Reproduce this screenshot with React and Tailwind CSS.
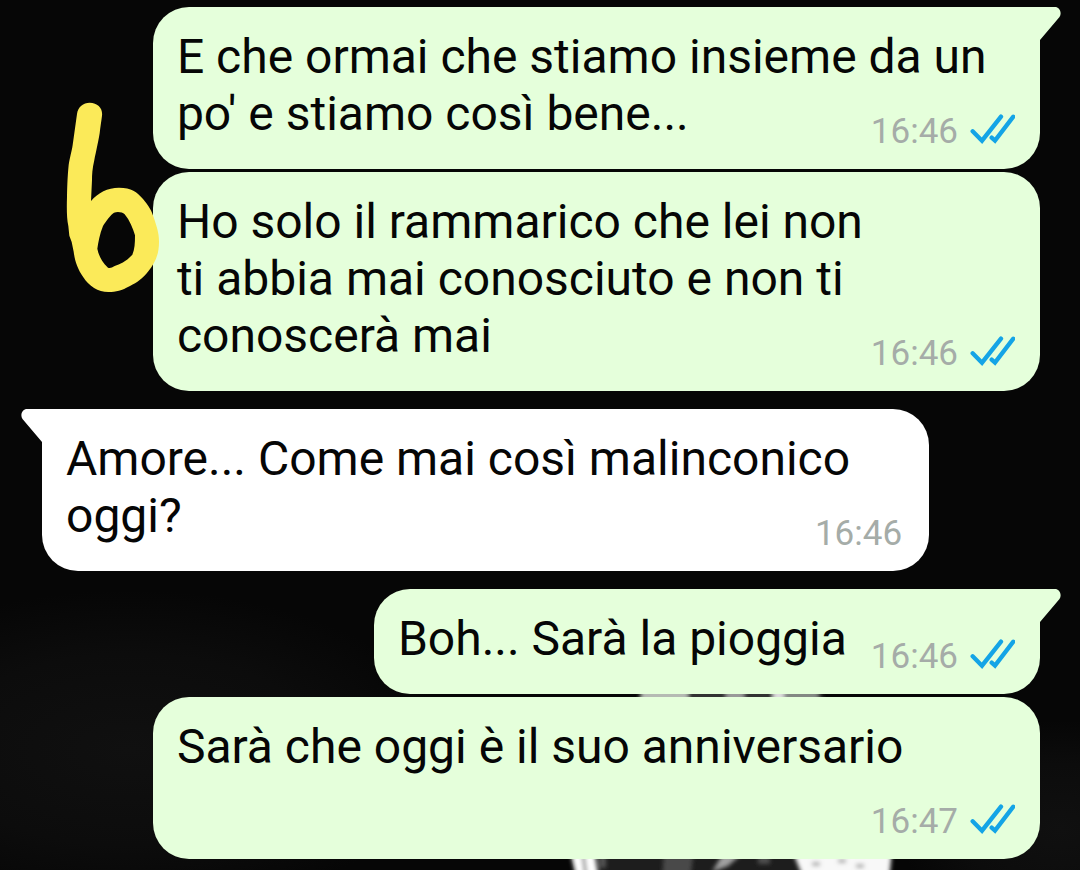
import React from 'react'
import clsx from 'clsx'

const groups = [
  {
    mine: true,
    messages: [
      { text: "E che ormai che stiamo insieme da un po' e stiamo così bene...", time: '16:46' },
      { text: 'Ho solo il rammarico che lei non\nti abbia mai conosciuto e non ti conoscerà mai', time: '16:46' },
    ],
  },
  {
    mine: false,
    messages: [{ text: 'Amore... Come mai così malinconico oggi?', time: '16:46' }],
  },
  {
    mine: true,
    messages: [
      { text: 'Boh... Sarà la pioggia', time: '16:46' },
      { text: 'Sarà che oggi è il suo anniversario', time: '16:47' },
    ],
  },
]

function ReadTicks() {
  return (
    <svg viewBox="0 0 135 90" className="w-[45px] h-[30px] mb-1.5" fill="none" stroke="#14a4e6" strokeWidth="13" strokeLinecap="round" aria-hidden="true">
      <path d="M8 52 L36 80 L93 8" />
      <path d="M65 71 L75 80 L130 8" />
    </svg>
  )
}

function Tail({ mine }) {
  return (
    <svg
      viewBox="0 0 24 36"
      className={clsx('absolute top-0 w-6 h-9', mine ? '-right-[21px] fill-[#e5ffdb]' : '-left-[21px] -scale-x-100 fill-white')}
      aria-hidden="true"
    >
      <path d="M0 0 H18 C22 0 25.500 5 22.500 10 L3 33 V36 H0 Z" />
    </svg>
  )
}

function Bubble({ message, mine, first }) {
  return (
    <li
      className={clsx(
        'relative flow-root max-w-8/9 rounded-[36px] pl-6 pt-[21px] pb-4',
        'text-[48px] leading-[57px] text-[#060606] whitespace-pre-line',
        mine ? 'self-end bg-[#e5ffdb] pr-[25px]' : 'self-start bg-white pr-[27px]',
        first && (mine ? 'rounded-tr-none' : 'rounded-tl-none')
      )}
    >
      {first && <Tail mine={mine} />}
      {message.text}
      {/* floats beside the last line, or drops under it when there is no room */}
      <div className="float-right flex items-center gap-3 ml-6 mt-[26px]">
        <time className="text-[35px] leading-[42px] text-[#a5aca8]">{message.time}</time>
        {mine && <ReadTicks />}
      </div>
    </li>
  )
}

function Wallpaper() {
  return (
    <svg viewBox="0 0 1080 870" preserveAspectRatio="xMidYMax slice" className="absolute inset-0 w-full h-full" aria-hidden="true">
      <defs>
        <filter id="soft" x="-20%" y="-20%" width="140%" height="140%">
          <feGaussianBlur stdDeviation="2" />
        </filter>
        <radialGradient id="haze">
          <stop offset="0" stopColor="#101010" />
          <stop offset="0.6" stopColor="#0c0c0c" />
          <stop offset="1" stopColor="#060606" />
        </radialGradient>
      </defs>
      <rect width="1080" height="870" fill="#060606" />
      <ellipse cx="130" cy="750" rx="320" ry="160" fill="url(#haze)" />
      <ellipse cx="1060" cy="830" rx="160" ry="110" fill="url(#haze)" />
      <g filter="url(#soft)">
        <path d="M642 690 H820 L890 850 H570 Z" fill="#333" />
        <path d="M641 688 H688 V704 H641 Z" fill="#b5bab3" />
        <path d="M726 688 H744 V704 H726 Z" fill="#999" />
        <path d="M773 688 H784 V704 H773 Z" fill="#ddd" />
        <path d="M784 688 H818 V704 H784 Z" fill="#838883" />
      </g>
      <path d="M570 850 H892 L888 880 H576 Z" fill="#1d1d1d" />
      <g filter="url(#soft)">
        <path d="M570 850 H594 L599 880 H577 Z" fill="#fff" />
        <path d="M581 850 H584 L588 880 H585 Z" fill="#777" />
        <path d="M598 850 H606 V868 H600 Z" fill="#555" />
        <path d="M664 850 H694 L690 880 H662 Z" fill="#4a4a4a" />
        <path d="M724 852 H744 L728 866 L712 872 Z" fill="#a0a0a0" />
        <path d="M758 856 H770 V864 H758 Z" fill="#505050" />
        <path d="M792 850 H892 L889 880 H804 Z" fill="#f8f8f8" />
        <path d="M812 862 H820 V866 H812 Z M838 859 H846 V863 H838 Z M856 864 H864 V868 H856 Z" fill="#aaa" />
      </g>
    </svg>
  )
}

// hand-drawn number over the chat
function SixMark() {
  return (
    <svg viewBox="0 0 480 690" className="absolute left-10 top-20 w-40 h-[230px]" role="img" aria-label="6">
      <path
        fill="#fbea59"
        fillRule="evenodd"
        d="M111 102 C114 80 130 68 149 68 C174 68 189 86 186 107 C184 125 181 140 179 160 C173 195 168 215 163 240 C157 265 156 285 156 300 L153 363 C175 338 202 323 237 323 C275 323 290 335 309 357 C326 377 335 392 341 412 C350 440 357 458 357 485 C357 525 345 548 325 574 C307 597 292 607 270 618 C244 632 229 636 205 636 C174 636 147 619 130 592 C112 565 105 545 101 515 L95 486 L88 467 L85 438 C80 415 80 385 81 350 C82 310 83 285 86 255 C90 230 95 215 98 195 Z M222 398 C212 404 197 425 189 438 C179 462 175 487 172 506 C176 525 183 543 204 563 C210 565 216 563 224 558 C240 551 256 547 277 524 C284 509 285 490 285 466 C279 446 269 421 254 403 C247 396 233 394 222 398 Z"
      />
    </svg>
  )
}

export default function App() {
  return (
    <main className="relative min-h-screen overflow-hidden bg-[#060606] font-['Roboto',sans-serif]">
      <Wallpaper />
      <div className="relative flex flex-col gap-[18px] pt-[7px] pb-[11px] pl-[42px] pr-10">
        {groups.map((group, i) => (
          <ul key={i} className="flex flex-col gap-[3px]">
            {group.messages.map((message, j) => (
              <Bubble key={j} message={message} mine={group.mine} first={j === 0} />
            ))}
          </ul>
        ))}
      </div>
      <SixMark />
    </main>
  )
}
